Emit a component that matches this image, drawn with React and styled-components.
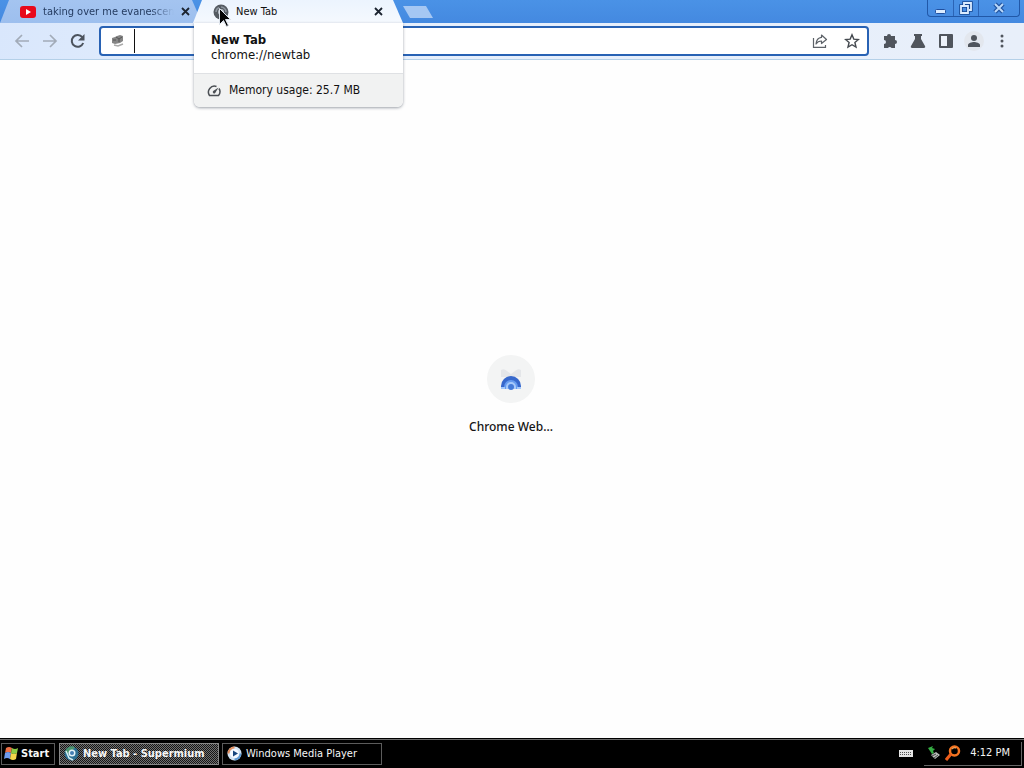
import React from 'react';
import styled, { createGlobalStyle } from 'styled-components';

const Global = createGlobalStyle`
  * { box-sizing: border-box; }
  body {
    margin: 0;
    background: #fefefe;
    font-family: "DejaVu Sans Condensed", "DejaVu Sans", sans-serif;
    font-size: 11px;
    line-height: 16px;
    color: #111;
  }
  button, input { font: inherit; color: inherit; }
  svg { display: block; flex: none; }
`;

const Screen = styled.div`
  display: flex;
  flex-direction: column;
  min-height: 100vh;
`;

const TitleBar = styled.header`
  display: flex;
  height: 23px;
  background: linear-gradient(#4a92e6, #4489e0);
`;

const Tab = styled.div`
  position: relative;
  z-index: ${p => (p.$active ? 2 : 1)};
  display: flex;
  align-items: center;
  gap: 7px;
  width: ${p => (p.$active ? 210 : 202)}px;
  margin-left: ${p => (p.$active ? -9 : 0)}px;
  padding: 0 ${p => (p.$active ? 20 : 12)}px 0 20px;
  height: 23px;
  &::before {
    content: "";
    position: absolute;
    inset: 0;
    z-index: -1;
    background: ${p => (p.$active ? 'linear-gradient(#ecf4fe, #f5f9fe)' : 'linear-gradient(#a4c4f0, #9dbfee)')};
    clip-path: polygon(9px 0, calc(100% - 10px) 0, 100% 100%, 0 100%);
  }
`;

const TabTitle = styled.span`
  flex: 1;
  min-width: 0;
  overflow: hidden;
  white-space: nowrap;
  color: ${p => (p.$fade ? '#253c61' : '#111')};
  mask-image: ${p => (p.$fade ? 'linear-gradient(to right, #000 82%, transparent)' : 'none')};
`;

const PlainButton = styled.button`
  display: flex;
  align-items: center;
  justify-content: center;
  flex: none;
  width: ${p => p.$size || 20}px;
  height: ${p => p.$size || 20}px;
  padding: 0;
  border: 0;
  border-radius: 50%;
  background: ${p => (p.$disc ? '#e3e7ee' : 'transparent')};
  color: ${p => p.$color || '#50555d'};
`;

const NewTabButton = styled.button`
  width: 30px;
  height: 12px;
  margin: 6px 0 0 0;
  padding: 0;
  border: 0;
  background: #a5c7f3;
  clip-path: polygon(0 0, 23px 0, 100% 100%, 7px 100%);
`;

const WindowButtons = styled.div`
  display: flex;
  height: 17px;
  margin: 0 4px 0 auto;
  border: 1px solid #2158a8;
  border-top: 0;
  border-radius: 0 0 4px 4px;
`;

const WindowButton = styled.button`
  display: flex;
  align-items: center;
  justify-content: center;
  width: ${p => p.$width}px;
  height: 16px;
  padding: 0;
  border: 0;
  border-left: ${p => (p.$first ? 0 : '1px solid #2b64b6')};
  background: transparent;
`;

const HoverCard = styled.aside`
  position: absolute;
  top: 23px;
  left: 1px;
  width: 209px;
  overflow: hidden;
  border-radius: 0 0 6px 6px;
  background: #fff;
  box-shadow: 0 1px 3px rgba(60, 70, 85, 0.5);
`;

const CardHead = styled.div`
  height: 51px;
  padding: 9px 17px;
  font-size: 13px;
  line-height: 15px;
  border-bottom: 1px solid #dfe1e4;
`;

const CardTitle = styled.div`
  font-weight: bold;
`;

const CardFoot = styled.div`
  display: flex;
  align-items: center;
  gap: 8px;
  height: 33px;
  padding: 0 13px 2px;
  background: #f1f2f2;
  font-size: 12px;
`;

const Pointer = styled.svg`
  position: absolute;
  left: 26px;
  top: 8px;
  z-index: 3;
`;

const Toolbar = styled.nav`
  display: flex;
  align-items: center;
  height: 37px;
  padding: 0 12px 1px;
  border-bottom: 1px solid #b4d0e8;
  background: linear-gradient(100deg, #d9e7fc, #e6effc 30%, #e8effa);
`;

const NavButtons = styled.div`
  display: flex;
  gap: 8px;
  margin-right: 11px;
`;

const AddressBar = styled.form`
  display: flex;
  align-items: center;
  flex: 1;
  gap: 8px;
  height: 30px;
  padding: 0 5px 0 9px;
  border: 2px solid #2862b4;
  border-radius: 4px;
  background: #fff;
`;

const AddressInput = styled.input`
  flex: 1;
  min-width: 0;
  height: 24px;
  padding: 0 4px;
  border: 0;
  border-left: 1px solid #111;
  outline: 0;
  background: transparent;
`;

const BoxActions = styled.div`
  display: flex;
  gap: 12px;
`;

const Actions = styled.div`
  display: flex;
  gap: 8px;
  margin-left: 11px;
`;

const Page = styled.main`
  display: flex;
  flex: 1;
  align-items: center;
  justify-content: center;
  padding: 0 2px 8px 0;
`;

const Shortcut = styled.a`
  display: flex;
  flex-direction: column;
  align-items: center;
  gap: 16px;
  color: #151515;
  text-decoration: none;
  font-family: "Noto Sans", "Open Sans", sans-serif;
  font-size: 12px;
  font-weight: 500;
`;

const Disc = styled.span`
  display: flex;
  align-items: center;
  justify-content: center;
  width: 48px;
  height: 48px;
  border-radius: 50%;
  background: #f3f4f4;
`;

const Taskbar = styled.footer`
  display: flex;
  align-items: center;
  gap: 4px;
  height: 30px;
  padding: 0 2px 0 1px;
  border-top: 1px solid #000;
  background: #000;
  box-shadow: inset 0 1px #6c6c6c;
  color: #f4f4f4;
`;

const TaskButton = styled.button`
  display: flex;
  align-items: center;
  gap: ${p => (p.$start ? 2 : 4)}px;
  width: ${p => (p.$start ? 54 : 160)}px;
  height: 22px;
  padding: 0 ${p => (p.$start ? 2 : 4)}px;
  border: 1px solid ${p => (p.$pressed ? '#888' : '#5c5c5c')};
  background: ${p => (p.$pressed ? 'repeating-conic-gradient(#707070 0 25%, #161616 0 50%) 0 0 / 2px 2px' : '#000')};
  color: #f7f7f7;
  font-weight: ${p => (p.$start || p.$pressed ? 'bold' : 'normal')};
  white-space: nowrap;
`;

const TaskList = styled.div`
  display: flex;
  gap: 3px;
`;

const Tray = styled.div`
  display: flex;
  align-items: center;
  gap: 11px;
  margin-left: auto;
`;

const Clock = styled.div`
  display: flex;
  align-items: center;
  gap: 4px;
  height: 24px;
  padding: 0 11px 0 3px;
  border: solid #666;
  border-width: 0 1px 1px 0;
  time { margin-left: 5px; white-space: nowrap; }
`;

const CloseIcon = () => (
  <svg width="9" height="9" viewBox="0 0 9 9" fill="none" stroke="#1c2430" strokeWidth="1.8"><path d="M1 1l7 7M8 1L1 8" /></svg>
);

const YoutubeIcon = () => (
  <svg width="16" height="12" viewBox="0 0 16 12"><rect width="16" height="12" rx="3" fill="#e8091c" /><path d="M6 3l5 3-5 3z" fill="#fff" /></svg>
);

const TabGlobe = () => (
  <svg width="16" height="16" viewBox="0 0 16 16"><circle cx="8" cy="8" r="7.500" fill="#555b62" /><path d="M8 3a5 5 0 0 1 5 5M3 8a5 5 0 0 1 3-4.500" stroke="#8d959e" strokeWidth="1.500" fill="none" /><circle cx="8" cy="8" r="3" fill="#b6bdc5" /></svg>
);

const BackIcon = ({ flip }) => (
  <svg width="16" height="14" viewBox="0 0 16 14" fill="none" stroke="#a2abb8" strokeWidth="1.700"><path d={flip ? 'M1 7h13M8 1l6 6-6 6' : 'M15 7H2M8 1L2 7l6 6'} /></svg>
);

const ReloadIcon = () => (
  <svg width="16" height="16" viewBox="0 0 16 16"><path d="M13.200 10A5.900 5.900 0 1 1 12.300 4.200" fill="none" stroke="#4c535d" strokeWidth="2" /><path d="M14.500 1v6.500H8z" fill="#4c535d" /></svg>
);

const EngineIcon = () => (
  <svg width="16" height="16" viewBox="0 0 16 16"><path d="M7 3l3-1 3 1v5l-3 2-5 1-3-1V5l3-1z" fill="#858585" /><path d="M6 4l3 2 3-2M9 6v3M3 7h3" stroke="#555" fill="none" /><path d="M4 12l4 1 5-2" fill="none" stroke="#aaa" strokeWidth="1.500" /></svg>
);

const ShareIcon = () => (
  <svg width="16" height="16" viewBox="0 0 16 16" fill="none" stroke="#5d6268" strokeWidth="1.200"><path d="M1.500 5v9.400h12V12" /><path d="M9.500 2l5 4.500-5 4V8C7 8 5.200 9 4 11c.4-4 2.200-6.200 5.500-6.600z" strokeLinejoin="round" /></svg>
);

const StarIcon = () => (
  <svg width="16" height="16" viewBox="0 0 16 16" fill="none" stroke="#44494f" strokeWidth="1.400"><path d="M8 1.800l1.800 4.300 4.600.4-3.500 3 1.100 4.600L8 11.700l-4 2.400 1.100-4.600-3.500-3 4.600-.4z" /></svg>
);

const PuzzleIcon = () => (
  <svg width="16" height="16" viewBox="0 0 16 16" fill="currentColor"><path d="M2 3h3a2 2 0 0 1 4 0h4v4a2 2 0 0 1 0 4v4H9.500a2 2 0 0 0-3.500 0H2v-4a2 2 0 0 0 0-4z" /></svg>
);

const FlaskIcon = () => (
  <svg width="16" height="16" viewBox="0 0 16 16" fill="currentColor"><path d="M4 1h8v2h-1v3l4 7c.6 1-.1 2-1.200 2H2.200C1.100 15 .4 14 1 13l4-7V3H4z" /></svg>
);

const PanelIcon = () => (
  <svg width="14" height="14" viewBox="0 0 14 14"><rect width="14" height="14" rx="1" fill="currentColor" /><path d="M2 2h6v10H2z" fill="#edf2fa" /></svg>
);

const PersonIcon = () => (
  <svg width="14" height="14" viewBox="0 0 14 14" fill="currentColor"><circle cx="7" cy="4" r="3" /><path d="M1 13v-2c0-2 4-3 6-3s6 1 6 3v2z" /></svg>
);

const DotsIcon = () => (
  <svg width="4" height="14" viewBox="0 0 4 14" fill="currentColor"><circle cx="2" cy="2" r="1.500" /><circle cx="2" cy="7" r="1.500" /><circle cx="2" cy="12" r="1.500" /></svg>
);

const GaugeIcon = () => (
  <svg width="14" height="14" viewBox="0 0 14 14"><path d="M9.500 3.500A6 6 0 0 0 2.500 12.500h9A6 6 0 0 0 12 5.500" fill="none" stroke="#4b4f54" strokeWidth="1.500" /><path d="M11.500 4.500L8.200 10a1.400 1.400 0 0 1-2-2z" fill="#4b4f54" /></svg>
);

const StoreIcon = () => (
  <svg width="24" height="24" viewBox="0 0 24 24"><path d="M2 3q3-2 6 1l4 3 4-3q3-3 6-1v7H2z" fill="#e4e6e9" /><path d="M2 22v-3a10 10 0 0 1 20 0v3z" fill="#3768cc" /><path d="M5 22v-2a7 7 0 0 1 14 0v2z" fill="#669cf0" /><path d="M7 22v-2a5 5 0 0 1 10 0v2z" fill="#a8cafa" /><circle cx="12" cy="20" r="3" fill="#447bd8" /><path d="M2 21h4M18 21h4" stroke="#a3c8fa" strokeWidth="2" /></svg>
);

const WindowsFlag = () => (
  <svg width="15" height="15" viewBox="0 0 15 15"><path d="M2 2q3-2 6 0L7 7Q4 5 1 7z" fill="#ed7047" /><path d="M8 2q3 2 6 0l-1 5q-3 2-6 0z" fill="#8dcb45" /><path d="M1 7q3-2 6 0l-1 6q-3-2-6 0z" fill="#6d9bf0" /><path d="M7 7q3 2 6 0l-1 6q-3 2-6 0z" fill="#f4d44b" /></svg>
);

const SupermiumIcon = () => (
  <svg width="15" height="15" viewBox="0 0 15 15"><circle cx="7.500" cy="7.500" r="7" fill="#2c6f92" /><path d="M1 6A7 7 0 0 1 11 1L8 5 4 8z" fill="#4d946e" /><path d="M2 5l3 7 4 2" stroke="#d4eff3" strokeWidth="1.500" fill="none" /><circle cx="8" cy="7" r="3.500" fill="#e2f2f7" /><circle cx="8" cy="7" r="2" fill="#427eb3" /></svg>
);

const MediaIcon = () => (
  <svg width="15" height="15" viewBox="0 0 15 15"><circle cx="7.500" cy="7.500" r="7" fill="#d3e4f3" /><path d="M1.500 7.500a6 6 0 0 1 6-6" stroke="#e38d5d" strokeWidth="2" fill="none" /><path d="M7.500 13.500a6 6 0 0 0 6-6" stroke="#609bd5" strokeWidth="2" fill="none" /><circle cx="7.500" cy="7.500" r="4.500" fill="#f6faff" /><path d="M6 4.500l5 3-5 3z" fill="#17457d" /></svg>
);

const KeyboardIcon = () => (
  <svg width="14" height="7" viewBox="0 0 14 7"><rect width="14" height="7" fill="#e6e6e6" /><path d="M1 2.500h12M1 4.500h12" stroke="#555" strokeDasharray="1 1" /></svg>
);

const DeviceIcon = () => (
  <svg width="14" height="14" viewBox="0 0 14 14"><path d="M4 9l5-3 4 3-5 4z" fill="#b9bdba" /><path d="M5 10l4-2M7 12l4-3" stroke="#444" /><path d="M1 2l5-2-1 2 3 1-2 2 1 2-2 1-2-3z" fill="#35ad43" /></svg>
);

const SearchTrayIcon = () => (
  <svg width="16" height="16" viewBox="0 0 16 16" fill="none"><circle cx="9.500" cy="6" r="4.500" stroke="#f47522" strokeWidth="2.500" /><path d="M6 9l-5 6" stroke="#ed5d1b" strokeWidth="3" /><path d="M7 4q2-2 4-1" stroke="#ffc07a" /></svg>
);

export default function App() {
  return (
    <>
      <Global />
      <Screen>
        <TitleBar>
          <Tab>
            <YoutubeIcon />
            <TabTitle $fade>taking over me evanescen</TabTitle>
            <PlainButton $size={9} aria-label="Close tab"><CloseIcon /></PlainButton>
          </Tab>
          <Tab $active>
            <TabGlobe />
            <TabTitle>New Tab</TabTitle>
            <PlainButton $size={9} aria-label="Close tab"><CloseIcon /></PlainButton>
            <HoverCard>
              <CardHead>
                <CardTitle>New Tab</CardTitle>
                <div>chrome://newtab</div>
              </CardHead>
              <CardFoot><GaugeIcon />Memory usage: 25.7 MB</CardFoot>
            </HoverCard>
            <Pointer width="12" height="20" viewBox="0 0 12 20"><path d="M.5.5v16l4-4 3 6 2-1-3-6h5z" fill="#050505" stroke="#dce3eb" /></Pointer>
          </Tab>
          <NewTabButton aria-label="New tab" />
          <WindowButtons>
            <WindowButton $first $width={25} aria-label="Minimize"><svg width="13" height="14" viewBox="0 0 13 14"><rect x="1.500" y="8.500" width="10" height="4" rx="1" fill="#dcecff" stroke="#2050a0" /></svg></WindowButton>
            <WindowButton $width={25} aria-label="Restore"><svg width="14" height="14" viewBox="0 0 14 14" fill="none"><path d="M5 4V2h7v7h-2M2 5h7v7H2z" stroke="#174891" strokeWidth="3.500" /><path d="M5 4V2h7v7h-2M2 5h7v7H2z" stroke="#dcedff" strokeWidth="1.800" /></svg></WindowButton>
            <WindowButton $width={41} aria-label="Close"><svg width="14" height="12" viewBox="0 0 14 12"><path d="M3 2l8 8M11 2l-8 8" stroke="#1f529f" strokeWidth="4.500" /><path d="M3 2l8 8M11 2l-8 8" stroke="#bad9fa" strokeWidth="2" /></svg></WindowButton>
          </WindowButtons>
        </TitleBar>
        <Toolbar>
          <NavButtons>
            <PlainButton aria-label="Back"><BackIcon /></PlainButton>
            <PlainButton aria-label="Forward"><BackIcon flip /></PlainButton>
            <PlainButton aria-label="Reload"><ReloadIcon /></PlainButton>
          </NavButtons>
          <AddressBar>
            <EngineIcon />
            <AddressInput aria-label="Address" />
            <BoxActions>
              <PlainButton type="button" aria-label="Share"><ShareIcon /></PlainButton>
              <PlainButton type="button" aria-label="Bookmark"><StarIcon /></PlainButton>
            </BoxActions>
          </AddressBar>
          <Actions>
            <PlainButton aria-label="Extensions"><PuzzleIcon /></PlainButton>
            <PlainButton aria-label="Experiments"><FlaskIcon /></PlainButton>
            <PlainButton aria-label="Side panel"><PanelIcon /></PlainButton>
            <PlainButton $disc aria-label="Profile"><PersonIcon /></PlainButton>
            <PlainButton aria-label="Menu"><DotsIcon /></PlainButton>
          </Actions>
        </Toolbar>
        <Page>
          <Shortcut href="#store"><Disc><StoreIcon /></Disc>Chrome Web...</Shortcut>
        </Page>
        <Taskbar>
          <TaskButton $start><WindowsFlag />Start</TaskButton>
          <TaskList>
            <TaskButton $pressed><SupermiumIcon />New Tab - Supermium</TaskButton>
            <TaskButton><MediaIcon />Windows Media Player</TaskButton>
          </TaskList>
          <Tray>
            <KeyboardIcon />
            <Clock><DeviceIcon /><SearchTrayIcon /><time>4:12 PM</time></Clock>
          </Tray>
        </Taskbar>
      </Screen>
    </>
  );
}
